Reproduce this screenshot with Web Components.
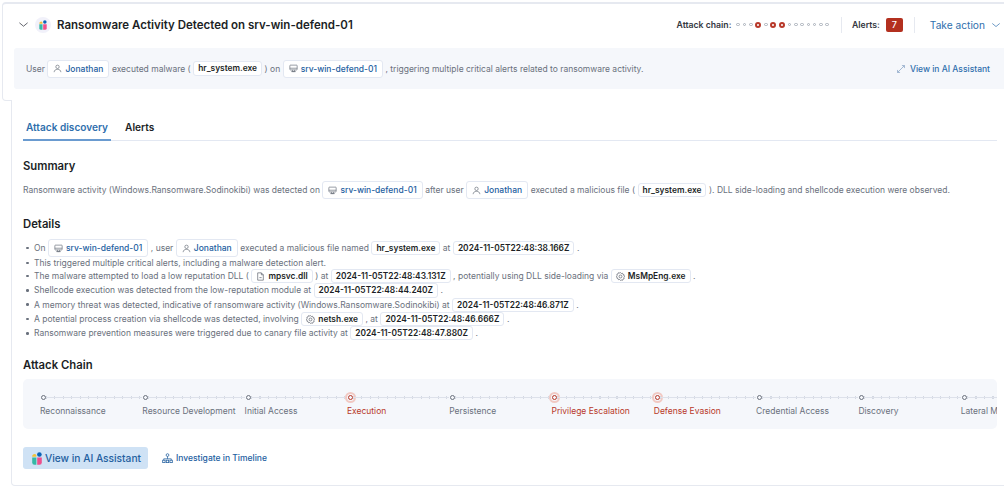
<!DOCTYPE html>
<html lang="en">
<head>
<meta charset="utf-8">
<title>Attack discovery</title>
<style>
  html, body { margin: 0; background: #fff; }
  body { font-family: Inter, "Liberation Sans", sans-serif; color: #6a717d; font-size: 8.5px; }
</style>
</head>
<body>

<page-shell>
  <discovery-header title-text="Ransomware Activity Detected on srv-win-defend-01">
    <text-row>
      User <entity-pill icon="user">Jonathan</entity-pill> executed malware ( <code-pill>hr_system.exe</code-pill> ) on
      <entity-pill icon="host">srv-win-defend-01</entity-pill> , triggering multiple critical alerts related to ransomware activity.
    </text-row>
  </discovery-header>

  <discovery-body>
    <tab-bar></tab-bar>

    <section-head>Summary</section-head>
    <text-row class="summary">
      Ransomware activity (Windows.Ransomware.Sodinokibi) was detected on <entity-pill icon="host">srv-win-defend-01</entity-pill>
      after user <entity-pill icon="user">Jonathan</entity-pill> executed a malicious file ( <code-pill>hr_system.exe</code-pill> ). DLL side-loading and shellcode execution were observed.
    </text-row>

    <section-head>Details</section-head>
    <detail-list>
      <text-row bullet>On <entity-pill icon="host">srv-win-defend-01</entity-pill> , user <entity-pill icon="user">Jonathan</entity-pill> executed a malicious file named <code-pill>hr_system.exe</code-pill> at <code-pill>2024-11-05T22:48:38.166Z</code-pill> .</text-row>
      <text-row bullet>This triggered multiple critical alerts, including a malware detection alert.</text-row>
      <text-row bullet>The malware attempted to load a low reputation DLL ( <code-pill icon="file">mpsvc.dll</code-pill> ) at <code-pill>2024-11-05T22:48:43.131Z</code-pill> , potentially using DLL side-loading via <code-pill icon="gear">MsMpEng.exe</code-pill> .</text-row>
      <text-row bullet>Shellcode execution was detected from the low-reputation module at <code-pill>2024-11-05T22:48:44.240Z</code-pill> .</text-row>
      <text-row bullet>A memory threat was detected, indicative of ransomware activity (Windows.Ransomware.Sodinokibi) at <code-pill>2024-11-05T22:48:46.871Z</code-pill> .</text-row>
      <text-row bullet>A potential process creation via shellcode was detected, involving <code-pill icon="gear">netsh.exe</code-pill> , at <code-pill>2024-11-05T22:48:46.666Z</code-pill> .</text-row>
      <text-row bullet>Ransomware prevention measures were triggered due to canary file activity at <code-pill>2024-11-05T22:48:47.880Z</code-pill> .</text-row>
    </detail-list>

    <section-head>Attack Chain</section-head>
    <attack-chain>
      <chain-step>Reconnaissance</chain-step>
      <chain-step>Resource Development</chain-step>
      <chain-step>Initial Access</chain-step>
      <chain-step hit>Execution</chain-step>
      <chain-step>Persistence</chain-step>
      <chain-step hit>Privilege Escalation</chain-step>
      <chain-step hit>Defense Evasion</chain-step>
      <chain-step>Credential Access</chain-step>
      <chain-step>Discovery</chain-step>
      <chain-step>Lateral Movement</chain-step>
    </attack-chain>

    <action-row></action-row>
  </discovery-body>
</page-shell>

<script>
const ICONS = {
  user: '<circle cx="8" cy="5" r="3"/><path d="M2 14.500c0-3.200 2.600-5 6-5s6 1.800 6 5"/>',
  host: '<rect x="1.500" y="2" width="13" height="8.500" rx="1"/><path d="M1.500 7.500h13M6 10.500v3h4v-3M4 13.500h8"/>',
  file: '<path d="M3 1.500h6.500l3.500 3.500v9.500H3z"/><path d="M9.500 1.500V5H13M6 10h4"/>',
  gear: '<path d="M8 1l1.500 1.700 2.200-.4.700 2.100 2.100.7-.4 2.200L15.200 8l-1.100 1.700.4 2.200-2.100.7-.7 2.100-2.200-.4L8 15l-1.500-1.700-2.200.4-.7-2.100-2.100-.7.4-2.200L.8 8l1.100-1.700-.4-2.200 2.100-.7.7-2.100 2.200.4z"/><circle cx="8" cy="8" r="2.600"/>',
  expand: '<path d="M9.500 2.500h4v4M13.500 2.500l-11 11M2.500 9.500v4h4"/>',
  timeline: '<circle cx="8" cy="3" r="2"/><path d="M8 5v3.500M2.500 8.500h11M2.500 8.500v2M13.500 8.500v2"/><rect x="1" y="10.500" width="3.500" height="3.500"/><rect x="6.200" y="10.500" width="3.500" height="3.500"/><rect x="11.500" y="10.500" width="3.500" height="3.500"/>',
  chevron: '<path d="M2 5.500l6 5 6-5"/>'
}

function icon(name, size, color) {
  return `<svg width="${size}" height="${size}" viewBox="0 0 16 16" fill="none" stroke="${color}" stroke-width="1.100" style="flex:none;display:block">${ICONS[name]}</svg>`
}

function aiLogo(w, h) {
  return `<svg width="${w}" height="${h}" viewBox="0 0 10 13" style="flex:none;display:block">
    <path d="M.2 4.800A2.300 2.300 0 0 1 4.400 3.200v1.600z" fill="#f3c13a"/>
    <path d="M.2 5.600h4.200v7.200H2.400A2.200 2.200 0 0 1 .2 10.600z" fill="#35b8a6"/>
    <circle cx="7.400" cy="2.500" r="2.300" fill="#0b64b8"/>
    <path d="M5.200 5.600H9.800v5A2.200 2.200 0 0 1 7.600 12.800H5.200z" fill="#ee4f8d"/>
  </svg>`
}

class BaseElement extends HTMLElement {
  constructor() {
    super()
    this.attachShadow({ mode: 'open' })
  }
  render(html) {
    this.shadowRoot.innerHTML = html
  }
}

class PageShell extends BaseElement {
  connectedCallback() {
    this.render(`<style>
      :host { display: flex; flex-direction: column; width: 1004px; height: 488px; overflow: hidden; background: #fff; }
    </style><slot></slot>`)
  }
}

class DiscoveryHeader extends BaseElement {
  connectedCallback() {
    this.render(`<style>
      :host { display: block; flex: none; margin: 2px -12px 0 2px; height: 99px; box-sizing: border-box; background: #fff;
        border: 1px solid #e6e9f0; border-top-width: 2px; border-radius: 4px; }
      .top { display: flex; align-items: center; height: 41px; padding: 0 0 0 15px; }
      .title { margin: 0 0 0 6px; font-size: 11.500px; font-weight: 600; color: #1c1f26; flex: 1; white-space: nowrap; }
      .badge-logo { width: 16px; height: 16px; border-radius: 50%; background: #f1f1fa; display: flex; align-items: center; justify-content: center; margin-left: 6px; }
      .meta { display: flex; align-items: center; font-size: 8.700px; font-weight: 600; color: #343741; margin-right: 14px; }
      .dots { display: flex; align-items: center; gap: 2.700px; margin: 0 12px 0 5px; }
      .dots i { width: 3.600px; height: 3.600px; box-sizing: border-box; border: 1px solid #a9afb9; border-radius: 50%; }
      .dots i.hit { width: 6px; height: 6px; border: 2px solid #b8392a; }
      .sep { width: 1px; height: 16px; background: #e6e9f0; }
      .alerts { display: flex; align-items: center; margin-left: 10px; }
      .count { width: 17px; height: 14px; margin: 0 11px 0 6px; border-radius: 2px; background: #b3301f; color: #fff; font-size: 9px; font-weight: 500; display: flex; align-items: center; justify-content: center; }
      .take { display: flex; align-items: center; gap: 6px; margin-left: 15px; font-size: 10.200px; font-weight: 400; color: #2f6fad; }
      .panel { display: flex; align-items: center; height: 41px; margin: 3px 0 0 11px; padding: 0 25px 0 12px; background: #f5f7fb; border-radius: 3px; }
      .panel ::slotted(text-row) { flex: 1; }
      .assist { display: flex; align-items: center; gap: 4px; font-weight: 500; color: #2f6fad; white-space: nowrap; }
    </style>
    <div class="top">
      ${icon('chevron', 11, '#343741')}
      <span class="badge-logo">${aiLogo(8, 10)}</span>
      <h2 class="title">${this.getAttribute('title-text')}</h2>
      <div class="meta">
        <span>Attack chain:</span>
        <span class="dots">${[0,0,0,1,0,1,1,0,0,0,0,0,0,0].map(h => h ? '<i class="hit"></i>' : '<i></i>').join('')}</span>
        <span class="sep"></span>
        <span class="alerts">Alerts:<span class="count">7</span></span>
        <span class="sep"></span>
        <span class="take">Take action ${icon('chevron', 10, '#2f6fad')}</span>
      </div>
    </div>
    <div class="panel">
      <slot></slot>
      <span class="assist">${icon('expand', 10, '#7d9cc0')} View in AI Assistant</span>
    </div>`)
  }
}

class DiscoveryBody extends BaseElement {
  connectedCallback() {
    this.render(`<style>
      :host { display: block; flex: 1; margin: -1px -12px 2px 11px; padding: 0 18px 0 11px; background: #fff;
        border: 1px solid #e6e9f0; border-top: 0; border-radius: 0 0 4px 4px; }
    </style><slot></slot>`)
  }
}

class TabBar extends BaseElement {
  connectedCallback() {
    this.render(`<style>
      :host { display: flex; height: 41px; box-sizing: border-box; border-bottom: 1px solid #e3e8f2; font-size: 10.100px; font-weight: 600; color: #1c1f26; }
      span { display: flex; align-items: center; padding: 14px 3px 0; margin-right: 11px; border-bottom: 2px solid transparent; margin-bottom: -1px; }
      .on { color: #2f6fad; border-bottom-color: #6a9bd0; }
    </style><span class="on">Attack discovery</span><span>Alerts</span>`)
  }
}

class SectionHead extends BaseElement {
  connectedCallback() {
    this.render(`<style>
      :host { display: block; margin: 18px 0 8px; font-size: 11.300px; line-height: 14px; font-weight: 600; color: #1c1f26; }
    </style><slot></slot>`)
  }
}

class TextRow extends BaseElement {
  connectedCallback() {
    const dot = this.hasAttribute('bullet') ? '<span class="dot"></span>' : ''
    this.render(`<style>
      :host { display: flex; align-items: center; gap: 2.500px; white-space: nowrap; font-size: 8.500px; color: #6a717d; min-height: 12px; }
      .dot { width: 2.500px; height: 2.500px; border-radius: 50%; background: #6a717d; margin: 0 3px 0 3px; flex: none; }
    </style>${dot}<slot></slot>`)
  }
}

class DetailList extends BaseElement {
  connectedCallback() {
    this.render(`<style>:host { display: block; }</style><slot></slot>`)
  }
}

class EntityPill extends BaseElement {
  connectedCallback() {
    this.render(`<style>
      :host { display: inline-flex; align-items: center; gap: 3px; height: 18px; box-sizing: border-box; padding: 0 5px; flex: none;
        background: #fff; border: 1px solid #e3e8f2; border-radius: 3px; color: #23609f; font-weight: 500; font-size: 8.500px; white-space: nowrap; }
    </style>${icon(this.getAttribute('icon'), 9, '#5a616d')}<slot></slot>`)
  }
}

class CodePill extends BaseElement {
  connectedCallback() {
    const name = this.getAttribute('icon')
    this.render(`<style>
      :host { display: inline-flex; align-items: center; gap: 3px; height: 14.300px; box-sizing: border-box; padding: 0 4px; flex: none;
        background: #fff; border: 1px solid #e3e8f2; border-radius: 3px; color: #1c1f26; font-weight: 600; font-size: 8.400px; white-space: nowrap; }
    </style>${name ? icon(name, 9, '#4a505c') : ''}<slot></slot>`)
  }
}

class AttackChain extends BaseElement {
  connectedCallback() {
    this.render(`<style>
      :host { display: flex; height: 50px; box-sizing: border-box; margin-top: -1px; padding: 14px 0 0 17px; background: #f5f7fb; border-radius: 5px; overflow: hidden; }
    </style><slot></slot>`)
  }
}

class ChainStep extends BaseElement {
  connectedCallback() {
    const hit = this.hasAttribute('hit')
    this.render(`<style>
      :host { display: block; flex: none; width: 102.300px; font-size: 8.500px; color: ${hit ? '#b8392a' : '#6a717d'}; white-space: nowrap; }
      .track { display: flex; align-items: center; height: 8px; padding-left: 1px; }
      .dot { width: 5px; height: 5px; box-sizing: border-box; flex: none; border-radius: 50%; border: 1.300px solid ${hit ? '#b8392a' : '#6a717d'}; }
      .hit { box-shadow: 0 0 0 1px #f5f7fb, 0 0 0 3px #f1c9c3; }
      .rail { flex: 1; height: 3px; background:
        linear-gradient(#dde1ea, #dde1ea) 0 1px / 100% 1px no-repeat,
        repeating-linear-gradient(90deg, #d3d8e2 0 1px, transparent 1px 8.500px); }
      .label { margin-top: 5px; line-height: 11px; }
    </style>
    <div class="track"><span class="dot ${hit ? 'hit' : ''}"></span><span class="rail"></span></div>
    <div class="label"><slot></slot></div>`)
  }
}

class ActionRow extends BaseElement {
  connectedCallback() {
    this.render(`<style>
      :host { display: flex; align-items: center; gap: 14px; margin-top: 18px; }
      .primary { display: flex; align-items: center; gap: 3px; height: 22px; width: 125px; box-sizing: border-box; padding-left: 9px; background: #cfe2f5; border-radius: 3px; color: #23609f; font-size: 10.200px; font-weight: 500; white-space: nowrap; }
      .link { display: flex; align-items: center; gap: 3px; color: #23609f; font-size: 8.500px; font-weight: 500; }
    </style>
    <span class="primary">${aiLogo(10, 13)} View in AI Assistant</span>
    <span class="link">${icon('timeline', 11, '#23609f')} Investigate in Timeline</span>`)
  }
}

customElements.define('page-shell', PageShell)
customElements.define('discovery-header', DiscoveryHeader)
customElements.define('discovery-body', DiscoveryBody)
customElements.define('tab-bar', TabBar)
customElements.define('section-head', SectionHead)
customElements.define('text-row', TextRow)
customElements.define('detail-list', DetailList)
customElements.define('entity-pill', EntityPill)
customElements.define('code-pill', CodePill)
customElements.define('attack-chain', AttackChain)
customElements.define('chain-step', ChainStep)
customElements.define('action-row', ActionRow)
</script>
</body>
</html>
